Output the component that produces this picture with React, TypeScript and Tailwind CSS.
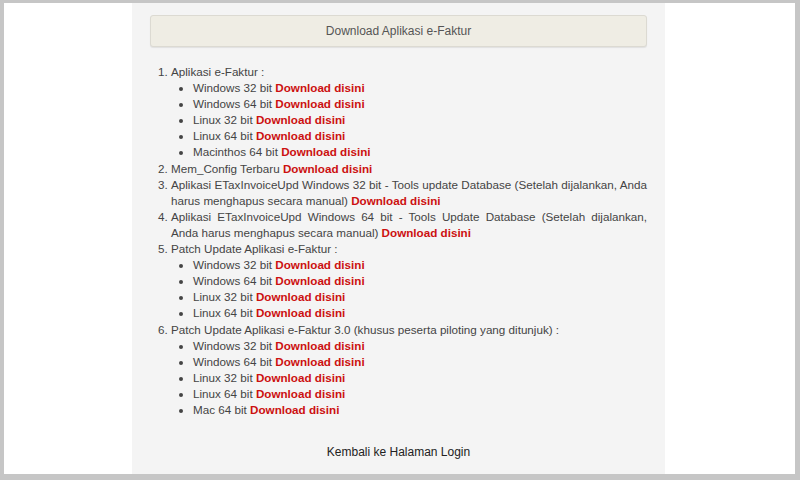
import React from 'react'

type Item = { label: string; sub?: string[] }

const link = <span className="font-bold text-[#cc1010]">Download disini</span>

const items: Item[] = [
  {
    label: 'Aplikasi e-Faktur :',
    sub: ['Windows 32 bit', 'Windows 64 bit', 'Linux 32 bit', 'Linux 64 bit', 'Macinthos 64 bit'],
  },
  { label: 'Mem_Config Terbaru' },
  {
    label:
      'Aplikasi ETaxInvoiceUpd Windows 32 bit - Tools update Database (Setelah dijalankan, Anda harus menghapus secara manual)',
  },
  {
    label:
      'Aplikasi ETaxInvoiceUpd Windows 64 bit - Tools Update Database (Setelah dijalankan, Anda harus menghapus secara manual)',
  },
  {
    label: 'Patch Update Aplikasi e-Faktur :',
    sub: ['Windows 32 bit', 'Windows 64 bit', 'Linux 32 bit', 'Linux 64 bit'],
  },
  {
    label: 'Patch Update Aplikasi e-Faktur 3.0 (khusus peserta piloting yang ditunjuk) :',
    sub: ['Windows 32 bit', 'Windows 64 bit', 'Linux 32 bit', 'Linux 64 bit', 'Mac 64 bit'],
  },
]

export default function App() {
  return (
    <div
      className="h-[480px] w-[800px] bg-white border-t-[3px] border-l-[4px] border-r-[5px] border-b-[6px] border-[#c6c6c6] overflow-hidden"
      style={{ fontFamily: '"Liberation Sans", Arial, sans-serif' }}
    >
      <div className="ml-[128px] w-[533px] h-full bg-[#f4f4f4] px-[18px] pt-[12px]">
        <div className="h-[32px] flex items-center justify-center rounded-[3px] border border-[#dcdad2] bg-[#efede4] shadow-[0_1px_1px_rgba(0,0,0,0.08)] text-[12px] text-[#555]">
          Download Aplikasi e-Faktur
        </div>

        <ol className="mt-[17px] list-decimal pl-[21px] text-[11.66px] leading-[16.1px] text-[#444] text-justify">
          {items.map((it, i) => (
            <li key={i}>
              {it.label}
              {!it.sub && <> {link}</>}
              {it.sub && (
                <ul className="list-disc pl-[22px]">
                  {it.sub.map((s) => (
                    <li key={s}>
                      {s} {link}
                    </li>
                  ))}
                </ul>
              )}
            </li>
          ))}
        </ol>

        <div className="mt-[25px] text-center text-[12px] text-[#222]">Kembali ke Halaman Login</div>
      </div>
    </div>
  )
}
